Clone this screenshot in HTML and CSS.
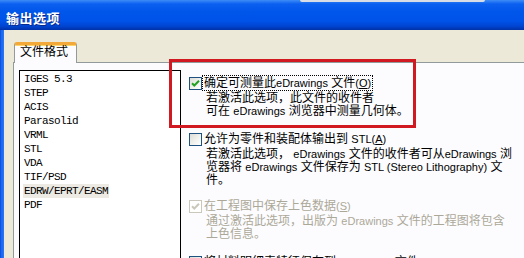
FILE: index.html
```html
<!DOCTYPE html>
<html lang="zh-CN">
<head>
<meta charset="UTF-8" />
<meta name="viewport" content="width=device-width, initial-scale=1" />
<title>输出选项</title>
<link rel="stylesheet" href="styles.css">
</head>
<body>
  <div class="screen">
    <div class="slider"></div>
    <div class="titlebar"><span class="title">输出选项</span></div>
    <div class="main">
      <div class="frame-left"></div>
      <div class="client">
        <div class="tabs"><div class="tab">文件格式</div></div>
        <div class="page">
          <ul class="list">
            <li>IGES 5.3</li>
            <li>STEP</li>
            <li>ACIS</li>
            <li>Parasolid</li>
            <li>VRML</li>
            <li>STL</li>
            <li>VDA</li>
            <li>TIF/PSD</li>
            <li><span class="sel">EDRW/EPRT/EASM</span></li>
            <li>PDF</li>
          </ul>

          <div class="options">
            <div class="opt">
              <div class="opt-head">
                <span class="chk on"><svg width="11" height="11" viewBox="0 0 11 11"><path d="M2 5.2 L4.3 7.5 L9 2.8" /></svg></span>
                <span class="label focus">确定可测量此<span class="en">eDrawings</span> 文件<span class="en">(<u>O</u>)</span></span>
              </div>
              <div class="opt-desc">若激活此选项，此文件的收件者<br>可在 <span class="en">eDrawings</span> 浏览器中测量几何体。</div>
            </div>

            <div class="opt opt-2">
              <div class="opt-head">
                <span class="chk"></span>
                <span class="label">允许为零件和装配体输出到 <span class="en">STL(<u>A</u>)</span></span>
              </div>
              <div class="opt-desc">若激活此选项， <span class="en">eDrawings</span> 文件的收件者可从<span class="en">eDrawings</span> 浏<br>览器将 <span class="en">eDrawings</span> 文件保存为 <span class="en">STL (Stereo Lithography)</span> 文<br>件。</div>
            </div>

            <div class="opt disabled">
              <div class="opt-head">
                <span class="chk on"><svg width="11" height="11" viewBox="0 0 11 11"><path d="M2 5.2 L4.3 7.5 L9 2.8" /></svg></span>
                <span class="label">在工程图中保存上色数据<span class="en">(<u>S</u>)</span></span>
              </div>
              <div class="opt-desc">通过激活此选项，出版为 <span class="en">eDrawings</span> 文件的工程图将包含<br>上色信息。</div>
            </div>

            <div class="opt opt-4">
              <div class="opt-head">
                <span class="chk on"><svg width="11" height="11" viewBox="0 0 11 11"><path d="M2 5.2 L4.3 7.5 L9 2.8" /></svg></span>
                <span class="label">将材料明细表特征保存到 <span class="en">eDrawings</span> 文件</span>
              </div>
            </div>
          </div>
        </div>
      </div>
    </div>
    <div class="mark"></div>
  </div>
</body>
</html>
```

FILE: styles.css
```css
body {
  margin: 0;
  font-family: "Liberation Sans", "Noto Sans CJK SC", sans-serif;
  font-size: 12px;
  color: #000;
  background: #ece9d8;
}
.screen {
  position: relative;
  width: 524px;
  height: 258px;
  overflow: hidden;
}
.slider {
  position: absolute;
  left: 300px;
  top: 0;
  width: 185px;
  height: 2px;
  background: #d8dde6;
  border-radius: 0 0 2px 2px;
}
.titlebar {
  height: 30px;
  display: flex;
  align-items: center;
  padding-left: 6px;
  padding-top: 5px;
  box-sizing: border-box;
  background: linear-gradient(to bottom, #3d8cf6 0, #0b5ff0 4px, #0056ea 12px, #0052e8 21px, #0045d2 26px, #0031a8 30px);
}
.title {
  color: #fff;
  font-family: "Noto Sans CJK SC", sans-serif;
  font-weight: 700;
  font-size: 13px;
  letter-spacing: 0.5px;
  text-shadow: 1px 1px 0 #0a2a8a;
}
.main {
  display: flex;
  height: 228px;
}
.frame-left {
  width: 4px;
  background: linear-gradient(to right, #0a3fc4 0, #1a66f2 1px, #1a6cf6 3px, #3b7ee8 4px);
}
.client {
  flex: 1;
  display: flex;
  flex-direction: column;
  padding: 12px 0 0 9px;
}
.tabs {
  display: flex;
  height: 20px;
}
.tab {
  position: relative;
  z-index: 1;
  margin-left: 1px;
  width: 63px;
  height: 21px;
  box-sizing: border-box;
  border: 1px solid #919b9c;
  border-bottom: none;
  border-top: 3px solid #f3a93a;
  border-radius: 3px 3px 0 0;
  background: #fcfcfe;
  font-size: 12px;
  line-height: 14px;
  padding-left: 5px;
  box-shadow: inset 0 1px 0 #ffd56a;
}
.page {
  flex: 1;
  display: flex;
  align-items: flex-start;
  border-top: 1px solid #919b9c;
  border-left: 1px solid #919b9c;
  background: #fcfcfe;
  padding: 7px 0 0 5px;
}
.list {
  margin: 0;
  padding: 1px 0 0 4px;
  list-style: none;
  width: 156px;
  height: 220px;
  border: 1px solid #000;
  background: #fff;
  font-family: "Liberation Mono", monospace;
  font-size: 11px;
  letter-spacing: -0.6px;
}
.list li {
  height: 14px;
  line-height: 14px;
}
.sel {
  background: #eceae2;
  padding: 1px;
  margin-left: -1px;
}
.options {
  margin-left: 8px;
  padding-top: 6px;
  display: flex;
  flex-direction: column;
}
.opt + .opt {
  margin-top: 12px;
}
.opt.opt-2 {
  margin-top: 14px;
}
.opt.opt-4 {
  margin-top: 14px;
}
.opt-head {
  display: flex;
  align-items: center;
  height: 14px;
}
.chk {
  width: 13px;
  height: 13px;
  box-sizing: border-box;
  border: 1px solid #1c5180;
  background: linear-gradient(135deg, #dcdcd7 0%, #f3f3f0 60%, #fff 100%);
  display: flex;
  align-items: center;
  justify-content: center;
}
.chk svg path {
  fill: none;
  stroke: #21a121;
  stroke-width: 2;
}
.label {
  margin-left: 1px;
  padding: 0 1px;
  line-height: 14px;
}
.label.focus {
  outline: 1px dotted #000;
}
.en {
  font-size: 11px;
}
.opt-desc {
  margin-top: 2px;
  padding-left: 17px;
  line-height: 13px;
}
.disabled {
  color: #aca899;
}
.disabled .chk {
  border-color: #cac8bb;
  background: #fff;
}
.disabled .chk svg path {
  stroke: #cac8bb;
}
.mark {
  position: absolute;
  left: 169px;
  top: 59px;
  width: 247px;
  height: 69px;
  box-sizing: border-box;
  border: 3px solid #d01920;
}
```
